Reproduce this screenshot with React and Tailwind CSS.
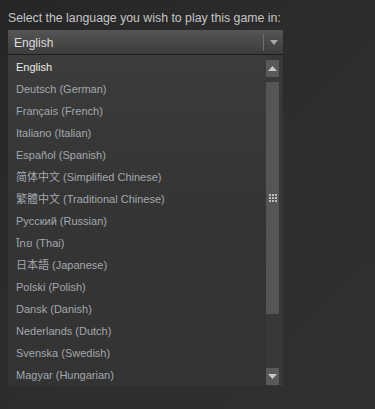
const languages = [
  'English',
  'Deutsch (German)',
  'Français (French)',
  'Italiano (Italian)',
  'Español (Spanish)',
  '简体中文 (Simplified Chinese)',
  '繁體中文 (Traditional Chinese)',
  'Русский (Russian)',
  'ไทย (Thai)',
  '日本語 (Japanese)',
  'Polski (Polish)',
  'Dansk (Danish)',
  'Nederlands (Dutch)',
  'Svenska (Swedish)',
  'Magyar (Hungarian)',
]

export default function App() {
  return (
    <div
      className="w-[375px] h-[409px] overflow-hidden bg-[linear-gradient(135deg,#262626_0%,#2e2e2e_60%,#303030_100%)] px-2 pt-[11px] text-[11px]"
      style={{ fontFamily: '"Liberation Sans", Arial, "Noto Sans CJK SC", "Noto Sans Thai", sans-serif' }}
    >
      <p className="h-[19px] leading-[14px] text-[12.3px] text-[#c6c6c6]">Select the language you wish to play this game in:</p>

      {/* Select box */}
      <div className="w-[275px] h-[24px] flex items-center bg-[linear-gradient(#555555,#3c3c3c)] shadow-[0_1px_0_#1e1e1e]">
        <span className="flex-1 pl-[6px] pt-[2px] text-[12px] text-[#dcdcdc]">English</span>
        <div className="w-px h-[17px] bg-[#6e6e6e]" />
        <div className="w-[19px] flex justify-center">
          <svg width="8" height="5" viewBox="0 0 8 5">
            <path d="M0 0h8L4 5z" fill="#a8a8a8" />
          </svg>
        </div>
      </div>

      {/* Dropdown list */}
      <div className="mt-px w-[275px] h-[331px] flex bg-[linear-gradient(#3c3c3c,#353535_40%,#333333)]">
        <ul className="flex-1 pt-px">
          {languages.map((lang, i) => (
            <li
              key={lang}
              className={`h-[22px] pl-[8px] flex items-center ${i === 0 ? 'text-[#ececec] font-medium' : 'text-[#a4a8ad]'}`}
            >
              {lang}
            </li>
          ))}
        </ul>
        {/* Scrollbar */}
        <div className="w-[17px] flex flex-col pt-[5px] pb-px pr-[4px] bg-[#383838]">
          <div className="h-[17px] bg-[#595959] flex items-center justify-center">
            <svg width="9" height="5" viewBox="0 0 9 5">
              <path d="M0 5h9L4.5 0z" fill="#c8c8c8" />
            </svg>
          </div>
          <div className="mt-[5px] h-[232px] bg-[#555555] flex items-center justify-center">
            <svg width="8" height="8" viewBox="0 0 8 8">
              {[0, 3, 6].map((y) =>
                [0, 3, 6].map((x) => <rect key={`${x}-${y}`} x={x} y={y} width="2" height="2" fill="#bdbdbd" />)
              )}
            </svg>
          </div>
          <div className="flex-1" />
          <div className="h-[17px] bg-[#595959] flex items-center justify-center">
            <svg width="9" height="5" viewBox="0 0 9 5">
              <path d="M0 0h9L4.5 5z" fill="#c8c8c8" />
            </svg>
          </div>
        </div>
      </div>
    </div>
  )
}
